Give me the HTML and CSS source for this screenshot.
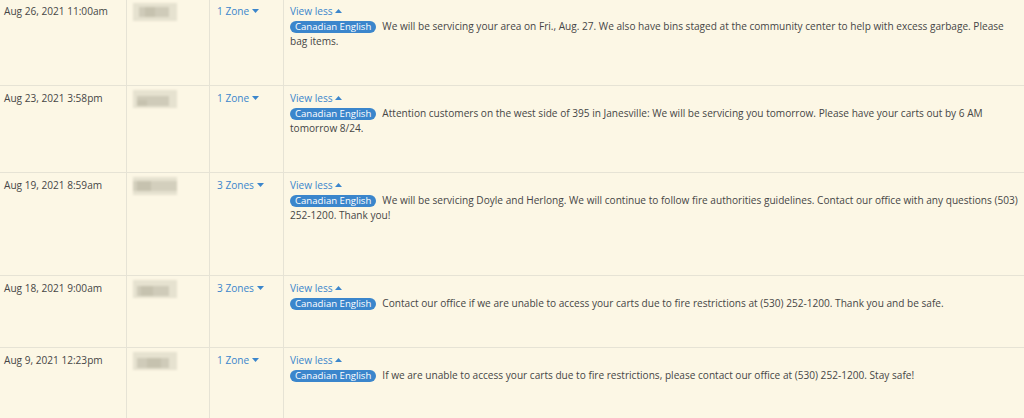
FILE: index.html
```html
<!DOCTYPE html>
<html lang="en">
<head>
  <meta charset="UTF-8">
  <meta name="viewport" content="width=device-width, initial-scale=1.0">
  <title>Sent Alerts</title>
  <link rel="stylesheet" href="styles.css">
</head>
<body>

  <div class="alerts">

    <div class="row">
      <div class="cell date">Aug 26, 2021 11:00am</div>
      <div class="cell sender">
        <svg class="blur" width="44" height="18" viewBox="0 0 44 18">
          <rect x="0" y="0" width="44" height="18" fill="#e6e2d0"/>
          <rect x="6" y="4" width="30" height="10" fill="#cfcbb9"/>
          <rect x="12" y="4" width="10" height="10" fill="#c6c2af"/>
        </svg>
      </div>
      <div class="cell zones"><a href="#">1 Zone <svg class="caret" width="7" height="4" viewBox="0 0 7 4"><path d="M0 0h7L3.5 4z"/></svg></a></div>
      <div class="cell message">
        <a href="#" class="toggle">View less <svg class="caret" width="7" height="4" viewBox="0 0 7 4"><path d="M0 4h7L3.5 0z"/></svg></a>
        <p><span class="lang">Canadian English</span><span class="text">We will be servicing your area on Fri., Aug. 27. We also have bins staged at the community center to help with excess garbage. Please bag items.</span></p>
      </div>
    </div>

    <div class="row">
      <div class="cell date">Aug 23, 2021 3:58pm</div>
      <div class="cell sender">
        <svg class="blur" width="44" height="18" viewBox="0 0 44 18">
          <rect x="0" y="0" width="44" height="18" fill="#e6e2d0"/>
          <rect x="4" y="6" width="32" height="10" fill="#cfcbb9"/>
          <rect x="4" y="10" width="10" height="6" fill="#c6c2af"/>
        </svg>
      </div>
      <div class="cell zones"><a href="#">1 Zone <svg class="caret" width="7" height="4" viewBox="0 0 7 4"><path d="M0 0h7L3.5 4z"/></svg></a></div>
      <div class="cell message">
        <a href="#" class="toggle">View less <svg class="caret" width="7" height="4" viewBox="0 0 7 4"><path d="M0 4h7L3.5 0z"/></svg></a>
        <p><span class="lang">Canadian English</span><span class="text">Attention customers on the west side of 395 in Janesville: We will be servicing you tomorrow. Please have your carts out by 6 AM tomorrow 8/24.</span></p>
      </div>
    </div>

    <div class="row tall">
      <div class="cell date">Aug 19, 2021 8:59am</div>
      <div class="cell sender">
        <svg class="blur" width="44" height="18" viewBox="0 0 44 18">
          <rect x="0" y="0" width="44" height="18" fill="#e6e2d0"/>
          <rect x="0" y="4" width="44" height="10" fill="#d3cfbd"/>
          <rect x="4" y="4" width="14" height="10" fill="#c6c2af"/>
        </svg>
      </div>
      <div class="cell zones"><a href="#">3 Zones <svg class="caret" width="7" height="4" viewBox="0 0 7 4"><path d="M0 0h7L3.5 4z"/></svg></a></div>
      <div class="cell message">
        <a href="#" class="toggle">View less <svg class="caret" width="7" height="4" viewBox="0 0 7 4"><path d="M0 4h7L3.5 0z"/></svg></a>
        <p><span class="lang">Canadian English</span><span class="text">We will be servicing Doyle and Herlong. We will continue to follow fire authorities guidelines. Contact our office with any questions (503) 252-1200. Thank you!</span></p>
      </div>
    </div>

    <div class="row">
      <div class="cell date">Aug 18, 2021 9:00am</div>
      <div class="cell sender">
        <svg class="blur" width="44" height="18" viewBox="0 0 44 18">
          <rect x="0" y="0" width="44" height="18" fill="#e6e2d0"/>
          <rect x="4" y="6" width="32" height="10" fill="#cfcbb9"/>
          <rect x="8" y="6" width="12" height="10" fill="#c6c2af"/>
        </svg>
      </div>
      <div class="cell zones"><a href="#">3 Zones <svg class="caret" width="7" height="4" viewBox="0 0 7 4"><path d="M0 0h7L3.5 4z"/></svg></a></div>
      <div class="cell message">
        <a href="#" class="toggle">View less <svg class="caret" width="7" height="4" viewBox="0 0 7 4"><path d="M0 4h7L3.5 0z"/></svg></a>
        <p><span class="lang">Canadian English</span><span class="text">Contact our office if we are unable to access your carts due to fire restrictions at (530) 252-1200. Thank you and be safe.</span></p>
      </div>
    </div>

    <div class="row">
      <div class="cell date">Aug 9, 2021 12:23pm</div>
      <div class="cell sender">
        <svg class="blur" width="44" height="18" viewBox="0 0 44 18">
          <rect x="0" y="0" width="44" height="18" fill="#e6e2d0"/>
          <rect x="4" y="6" width="32" height="10" fill="#cfcbb9"/>
          <rect x="14" y="6" width="14" height="10" fill="#c6c2af"/>
        </svg>
      </div>
      <div class="cell zones"><a href="#">1 Zone <svg class="caret" width="7" height="4" viewBox="0 0 7 4"><path d="M0 0h7L3.5 4z"/></svg></a></div>
      <div class="cell message">
        <a href="#" class="toggle">View less <svg class="caret" width="7" height="4" viewBox="0 0 7 4"><path d="M0 4h7L3.5 0z"/></svg></a>
        <p><span class="lang">Canadian English</span><span class="text">If we are unable to access your carts due to fire restrictions, please contact our office at (530) 252-1200. Stay safe!</span></p>
      </div>
    </div>

  </div>

</body>
</html>
```

FILE: styles.css
```css
body {
  margin: 0;
  padding: 0;
  background: #fcf7e5;
  font-family: "Open Sans", Arial, sans-serif;
  font-size: 10.1px;
  line-height: 15px;
  color: #464646;
  overflow: hidden;
}

a {
  color: #3b86cc;
  text-decoration: none;
}

.alerts {
  margin-top: -2px; /* list is scrolled a little */
}

.row {
  display: grid;
  grid-template-columns: 127px 83px 74px 1fr;
  border-top: 1px solid #e6e3d5;
}

.cell {
  padding: 5px 6px 36px 6px;
  border-right: 1px solid #e6e3d5;
}

.row.tall .cell {
  padding-bottom: 52px;
}

.cell:last-child {
  border-right: none;
}

.date {
  padding-left: 4px;
}

.sender {
  padding-left: 6px;
  padding-top: 4px;
}

.blur {
  display: block;
  filter: blur(1px);
}

.zones {
  padding-left: 7px;
}

.caret {
  fill: #3b86cc;
  vertical-align: 2px;
}

.message {
  padding-right: 3px;
}

.toggle {
  display: inline-block;
}

.message p {
  margin: 0;
}

.lang {
  display: inline-block;
  background: #3b86cc;
  color: #fff;
  font-size: 9.6px;
  border-radius: 7px;
  padding: 0 5px;
  line-height: 12px;
  margin-right: 6px;
}
```
